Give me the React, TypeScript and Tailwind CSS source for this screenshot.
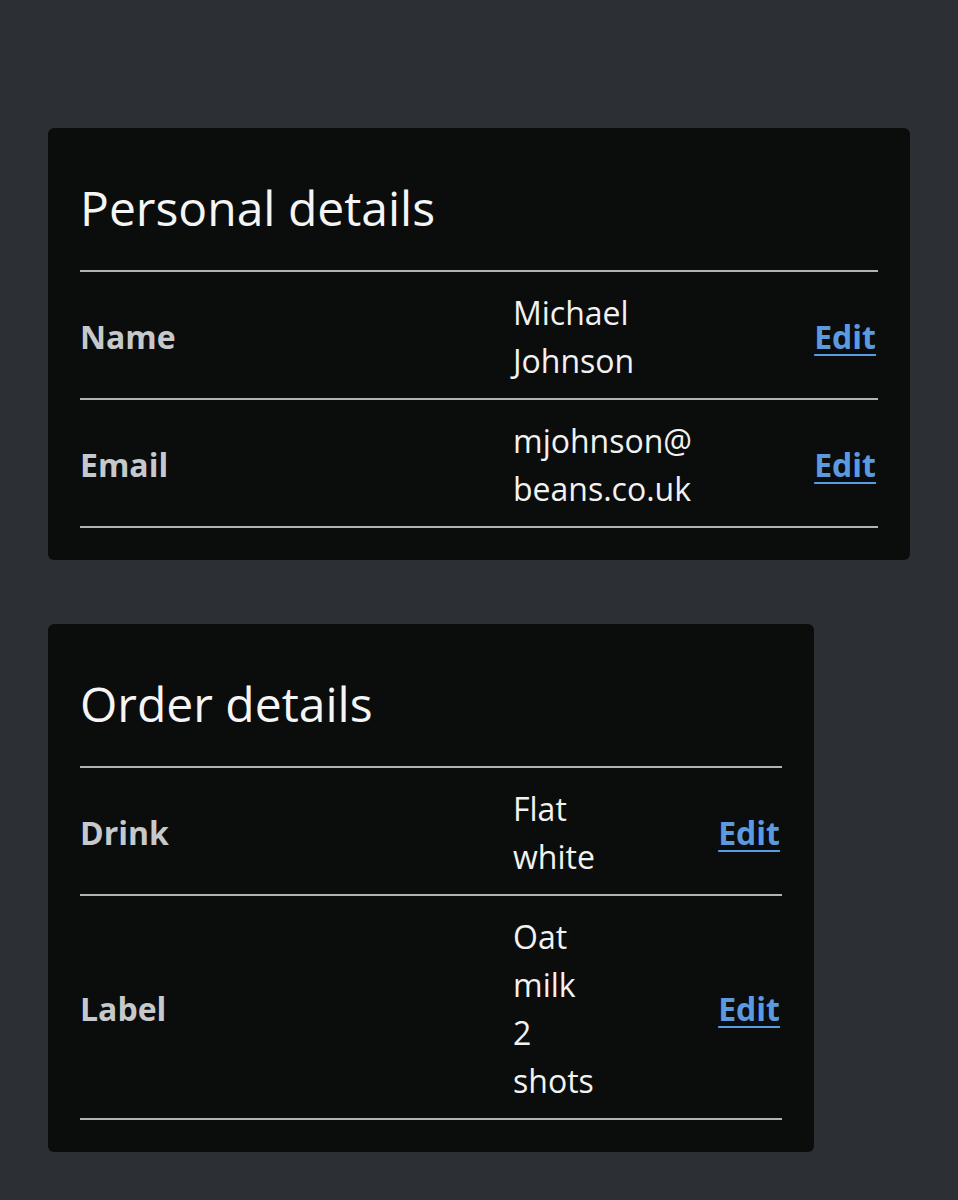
import React from "react";

type Row = { label: string; value: string[] };

function Card({ title, rows, width }: { title: string; rows: Row[]; width: string }) {
  return (
    <section className={`${width} rounded-[6px] bg-[#0b0d0d] px-8 pt-[50px] pb-8`}>
      <h2 className="text-[48px] leading-[60px] font-normal text-[#f5f5f5] mb-[32px]">{title}</h2>
      <dl className="border-t-2 border-[#b1b4b6]">
        {rows.map((r) => (
          <div
            key={r.label}
            className="grid grid-cols-[433px_1fr_auto] items-center border-b-2 border-[#b1b4b6] pt-[17px] pb-[13px]"
          >
            <dt className="text-[32px] leading-[48px] font-bold text-[#c6c9cc]">{r.label}</dt>
            <dd className="text-[32px] leading-[48px] text-[#f2f2f2] pr-[96px]">
              {r.value.map((v, i) => (
                <div key={i}>{v}</div>
              ))}
            </dd>
            <dd className="text-[32px] leading-[48px] font-bold">
              <a
                href="#"
                className="text-[#5a9be0] underline decoration-2 underline-offset-[5px] pr-[2px]"
              >
                Edit
              </a>
            </dd>
          </div>
        ))}
      </dl>
    </section>
  );
}

export default function App() {
  return (
    <div
      className="min-h-[1200px] bg-[#2c2f33] px-12 pt-[128px] pb-12 flex flex-col gap-[64px]"
      style={{ fontFamily: '"Open Sans", "Noto Sans", sans-serif' }}
    >
      <Card
        title="Personal details"
        width="w-[862px]"
        rows={[
          { label: "Name", value: ["Michael", "Johnson"] },
          { label: "Email", value: ["mjohnson@", "beans.co.uk"] },
        ]}
      />
      <Card
        title="Order details"
        width="w-[766px]"
        rows={[
          { label: "Drink", value: ["Flat", "white"] },
          { label: "Label", value: ["Oat", "milk", "2", "shots"] },
        ]}
      />
    </div>
  );
}
